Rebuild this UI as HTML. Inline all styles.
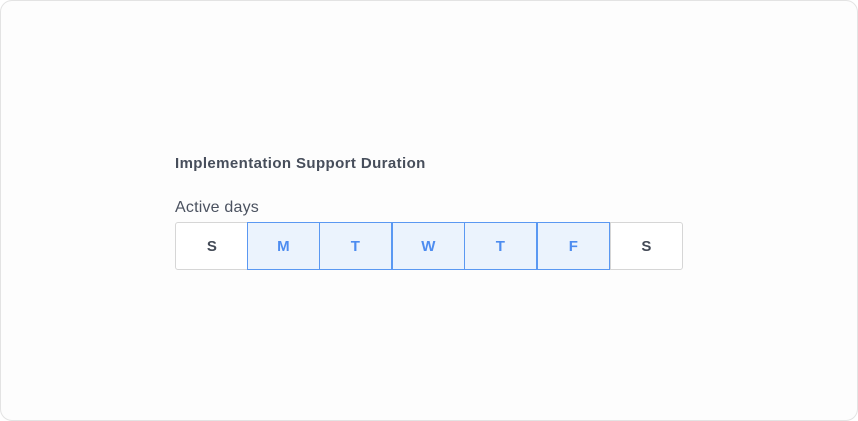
<!DOCTYPE html>
<html><head><style>
html,body{margin:0;padding:0;background:#fff;}
body{width:858px;height:421px;position:relative;font-family:"Liberation Sans",sans-serif;}
.card{position:absolute;left:0;top:0;width:856px;height:419px;border:1px solid #e3e3e3;border-radius:12px;background:#fdfdfd;}
.t{position:absolute;left:175px;top:155px;font-size:15px;font-weight:bold;color:#474e5b;letter-spacing:0.4px;}
.a{position:absolute;left:175px;top:199px;font-size:16px;color:#4b5260;letter-spacing:0.2px;}
.row{position:absolute;left:175px;top:222px;width:508px;height:48px;}
.c{position:absolute;top:0;height:46px;border:1px solid #d6d6d6;display:flex;align-items:center;justify-content:center;font-size:15px;font-weight:bold;color:#434a56;background:#fff;box-sizing:content-box;letter-spacing:0.3px;}
.on{background:#ebf3fd;border-color:#5a98f2;color:#4d8cf0;z-index:2;}
</style></head><body>
<div class="card"></div>
<div class="t">Implementation Support Duration</div>
<div class="a">Active days</div>
<div class="row">
<div class="c" style="left:0;width:72px;border-radius:3px 0 0 3px">S</div>
<div class="c on" style="left:72px;width:71px">M</div>
<div class="c on" style="left:144px;width:71px">T</div>
<div class="c on" style="left:217px;width:71px">W</div>
<div class="c on" style="left:289px;width:71px">T</div>
<div class="c on" style="left:362px;width:71px">F</div>
<div class="c" style="left:435px;width:71px;border-radius:0 3px 3px 0">S</div>
</div>
</body></html>
